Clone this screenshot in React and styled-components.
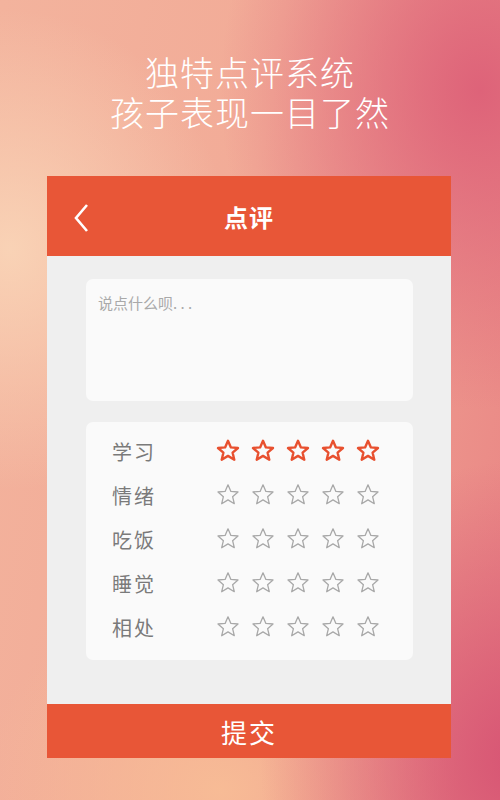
import styled, { createGlobalStyle } from "styled-components";

const GlobalStyle = createGlobalStyle`
  html, body {
    margin: 0;
    padding: 0;
  }
  body {
    font-family: "Noto Sans CJK SC", "Noto Sans", sans-serif;
  }
`;

const Page = styled.div`
  width: 500px;
  height: 800px;
  overflow: hidden;
  display: flex;
  flex-direction: column;
  align-items: center;
  background:
    radial-gradient(ellipse 260px 320px at 480px 90px, rgba(221, 96, 120, 0.95), rgba(221, 96, 120, 0) 100%),
    radial-gradient(ellipse 260px 300px at 520px 760px, rgba(214, 82, 115, 0.95), rgba(214, 82, 115, 0) 100%),
    radial-gradient(ellipse 220px 240px at 10px 250px, rgba(250, 216, 186, 0.85), rgba(250, 216, 186, 0) 100%),
    radial-gradient(ellipse 240px 200px at 220px 790px, rgba(248, 190, 150, 0.9), rgba(248, 190, 150, 0) 100%),
    linear-gradient(100deg, #f3b39d 0%, #f2ab97 45%, #e98584 100%);
`;

const Headline = styled.h1`
  margin: 52px 0 0;
  height: 124px;
  color: #fff;
  font-size: 34px;
  font-weight: 300;
  line-height: 40px;
  letter-spacing: 1px;
  text-align: center;
`;

const Panel = styled.div`
  width: 404px;
  height: 582px;
  margin-right: 2px;
  display: flex;
  flex-direction: column;
  background: #efefef;
`;

const TopBar = styled.div`
  height: 80px;
  flex: none;
  position: relative;
  display: flex;
  align-items: center;
  justify-content: center;
  background: #e85637;
`;

const Back = styled.svg`
  position: absolute;
  left: 26px;
  top: 27px;
`;

const Title = styled.div`
  color: #fff;
  font-size: 24px;
  font-weight: 700;
  letter-spacing: 1px;
`;

const Body = styled.div`
  flex: 1;
  padding: 23px 38px 0 39px;
  display: flex;
  flex-direction: column;
  gap: 21px;
`;

const Card = styled.div`
  background: #fafafa;
  border-radius: 7px;
`;

const Note = styled(Card)`
  height: 122px;
  box-sizing: border-box;
  padding: 13px 12px;
  color: #a9a9a9;
  font-size: 15px;
  line-height: 22px;
`;

const Ratings = styled(Card)`
  padding: 7px 0 11px 26px;
`;

const Row = styled.div`
  height: 44px;
  display: flex;
  align-items: center;
`;

const Label = styled.div`
  width: 104px;
  color: #7a7a7a;
  font-size: 20px;
  letter-spacing: 2px;
`;

const Stars = styled.div`
  display: flex;
  gap: 11px;
`;

const Submit = styled.button`
  height: 54px;
  flex: none;
  border: none;
  background: #e85637;
  color: #fff;
  font-family: inherit;
  font-size: 26px;
  letter-spacing: 2px;
  padding: 0;
`;

const Star = ({ on }) => (
  <svg width="24" height="24" viewBox="0 0 24 24">
    <path
      d="M12 1.8l2.9 6.6 7.1.6-5.4 4.7 1.7 7-6.3-3.8-6.3 3.8 1.7-7L2 9l7.1-.6z"
      fill="none"
      stroke={on ? "#e8502f" : "#a8a8a8"}
      strokeWidth={on ? 2.4 : 1.3}
      strokeLinejoin="round"
    />
  </svg>
);

const items = [
  { name: "学习", score: 5 },
  { name: "情绪", score: 0 },
  { name: "吃饭", score: 0 },
  { name: "睡觉", score: 0 },
  { name: "相处", score: 0 },
];

export default function App() {
  return (
    <Page>
      <GlobalStyle />
      <Headline>
        独特点评系统
        <br />
        孩子表现一目了然
      </Headline>
      <Panel>
        <TopBar>
          <Back width="16" height="30" viewBox="0 0 16 30">
            <path d="M14 2L3 15l11 13" fill="none" stroke="#fff" strokeWidth="2.6" />
          </Back>
          <Title>点评</Title>
        </TopBar>
        <Body>
          <Note>说点什么呗. . .</Note>
          <Ratings>
            {items.map((it) => (
              <Row key={it.name}>
                <Label>{it.name}</Label>
                <Stars>
                  {[0, 1, 2, 3, 4].map((i) => (
                    <Star key={i} on={i < it.score} />
                  ))}
                </Stars>
              </Row>
            ))}
          </Ratings>
        </Body>
        <Submit>提交</Submit>
      </Panel>
    </Page>
  );
}
